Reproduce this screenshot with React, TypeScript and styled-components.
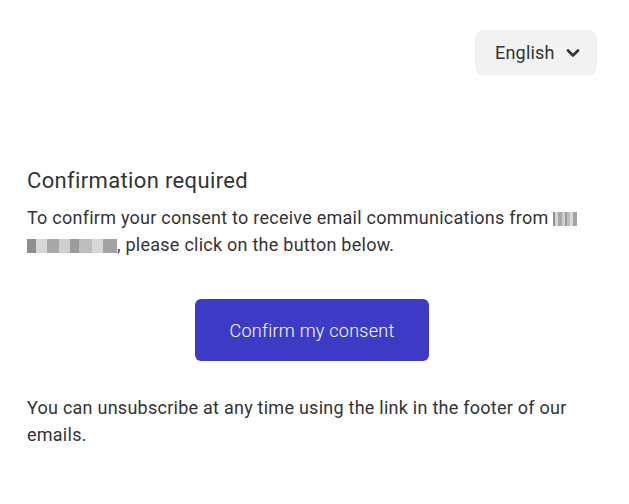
import React from 'react';
import styled, { createGlobalStyle } from 'styled-components';

const GlobalStyle = createGlobalStyle`
  html, body {
    margin: 0;
    padding: 0;
    background: #ffffff;
  }
  body {
    font-family: Roboto, 'Liberation Sans', sans-serif;
    color: #333333;
  }
`;

function ChevronDown() {
  return (
    <svg width='14' height='10' viewBox='0 0 14 10' fill='none'>
      <path
        d='M2 2.5 L7 7.5 L12 2.5'
        stroke='#333'
        strokeWidth='2.6'
        strokeLinecap='round'
        strokeLinejoin='round'
      />
    </svg>
  );
}

const App = () => {
  return (
    <>
      <GlobalStyle />
      <Page>
        <TopBar>
          <LanguageButton type='button'>
            English
            <ChevronDown />
          </LanguageButton>
        </TopBar>
        <Content>
          <Title>Confirmation required</Title>
          <Paragraph>
            To confirm your consent to receive email communications from{' '}
            <Redacted width={24} />
            <Redacted width={90} />, please click on the button below.
          </Paragraph>
          <ButtonRow>
            <ConfirmButton type='button'>Confirm my consent</ConfirmButton>
          </ButtonRow>
          <Paragraph>
            You can unsubscribe at any time using the link in the footer of our
            emails.
          </Paragraph>
        </Content>
      </Page>
    </>
  );
};

const Page = styled.div`
  padding: 30px 32px 30px 27px;
`;

const TopBar = styled.div`
  display: flex;
  justify-content: flex-end;
`;

const LanguageButton = styled.button`
  display: flex;
  align-items: center;
  justify-content: space-between;
  height: 45px;
  width: 122px;
  padding: 0 17px 0 20px;
  border: none;
  border-radius: 8px;
  background: #f2f2f2;
  font-family: Roboto, 'Liberation Sans', sans-serif;
  font-size: 18px;
  letter-spacing: 0.2px;
  color: #333;
  cursor: pointer;
`;

const Content = styled.div`
  margin-top: 92px;
`;

const Title = styled.h1`
  margin: 0 0 9px;
  font-size: 22px;
  line-height: 28px;
  font-weight: 400;
  letter-spacing: 0.35px;
  color: #333;
`;

const Paragraph = styled.p`
  margin: 0;
  font-size: 18px;
  line-height: 27px;
  letter-spacing: 0.25px;
  color: #333;
`;

const Redacted = styled.span<{ width: number }>`
  display: inline-block;
  width: ${(p) => p.width}px;
  height: 14px;
  vertical-align: -2px;
  background-color: #c4c4c4;
  background-image: linear-gradient(
      90deg,
      #8e8e8e 0 10%,
      #d6d6d6 10% 22%,
      #a8a8a8 22% 36%,
      #cfcfcf 36% 48%,
      #9c9c9c 48% 58%,
      #bdbdbd 58% 72%,
      #d8d8d8 72% 84%,
      #a2a2a2 84%
    ),
    linear-gradient(0deg, rgba(255, 255, 255, 0.35) 0 35%, transparent 35%);
  background-blend-mode: normal;
`;

const ButtonRow = styled.div`
  display: flex;
  justify-content: center;
  margin: 41px 0 33px;
`;

const ConfirmButton = styled.button`
  width: 234px;
  height: 62px;
  border: none;
  border-radius: 6px;
  background: #3d3bc6;
  color: #ffffff;
  font-family: Roboto, 'Liberation Sans', sans-serif;
  font-size: 18px;
  font-weight: 300;
  letter-spacing: 0.25px;
  cursor: pointer;
`;

export default App;
